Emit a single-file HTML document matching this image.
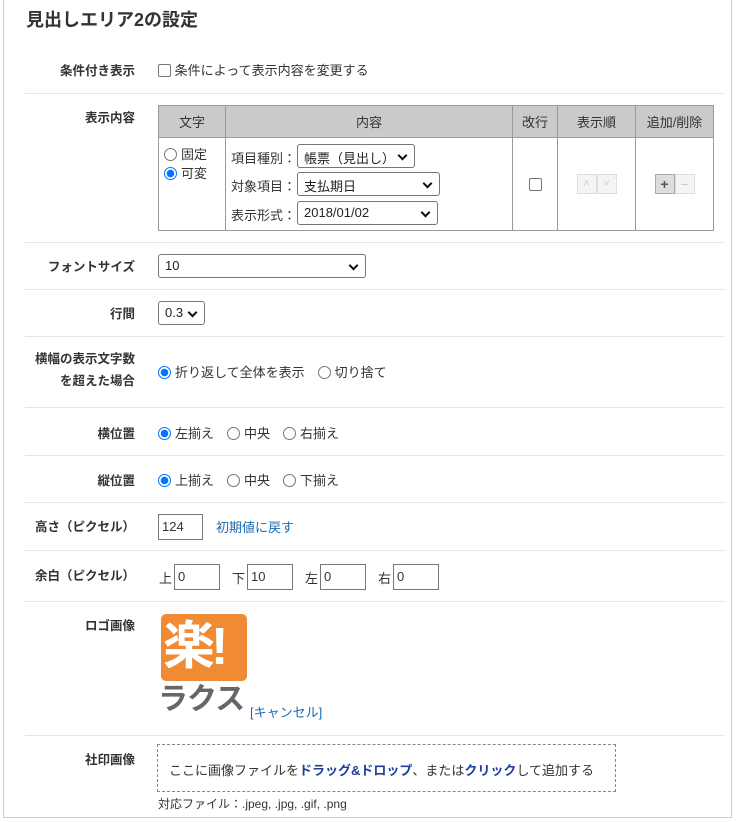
<!DOCTYPE html>
<html><head><meta charset="utf-8"><style>
*{box-sizing:border-box}
body{margin:0;width:736px;height:822px;background:#fff;font-family:"Liberation Sans","Noto Sans CJK JP",sans-serif;font-size:13px;color:#333;position:relative;overflow:hidden}
.frame{position:absolute;left:3px;top:-2px;width:729px;height:820px;border:1px solid #ccc}
.a{position:absolute}
h1{position:absolute;left:26px;top:6px;margin:0;font-size:18px;font-weight:bold;color:#333}
.lbl{position:absolute;right:601px;font-weight:bold;font-size:12.5px;text-align:right;white-space:nowrap}
.hr{position:absolute;left:25px;width:700px;height:1px;background:#e6e6e6}
.sel{position:absolute;height:24px;border:1px solid #767676;border-radius:3px;background:#fff;padding:3px 6px;font-size:13px;color:#222}
.sel:after{content:"";position:absolute;right:8px;top:7px;width:5px;height:5px;border-right:2px solid #111;border-bottom:2px solid #111;transform:rotate(45deg)}
.rad{display:inline-block;width:13px;height:13px;border:1px solid #767676;border-radius:50%;vertical-align:-2px;margin-right:4px;background:#fff}
.rad.on{border:1px solid #0075ff;background:radial-gradient(circle,#0075ff 3.5px,#fff 4px)}
.cb{display:inline-block;width:13px;height:13px;border:1px solid #767676;border-radius:2px;vertical-align:-2px;background:#fff}
.inp{position:absolute;height:26px;border:1px solid #767676;padding:4px 3px;font-size:13px;background:#fff}
table{border-collapse:collapse;position:absolute;left:158px;top:105px;width:556px}
td,th{border:1px solid #999;font-weight:normal;font-size:13px}
th{background:#c8cbc7;height:32px}
.btn{display:inline-block;width:20px;height:20px;border:1px solid #ddd;background:#f4f4f4;color:#ccc;font-size:11px;text-align:center;line-height:18px;vertical-align:middle}
a{color:#1a6bb5;text-decoration:none}
</style></head><body>
<div class="frame"></div>
<h1>見出しエリア2の設定</h1>

<div class="lbl" style="top:60px">条件付き表示</div>
<div class="a" style="left:158px;top:60px"><span class="cb"></span> 条件によって表示内容を変更する</div>
<div class="hr" style="top:93px"></div>

<div class="lbl" style="top:107px">表示内容</div>
<table>
<tr><th style="width:67px">文字</th><th style="width:287px">内容</th><th style="width:45px">改行</th><th style="width:78px">表示順</th><th>追加/削除</th></tr>
<tr style="height:93px"><td style="vertical-align:top;padding:7px 5px;line-height:19px"><span class="rad"></span>固定<br><span class="rad on"></span>可変</td>
<td style="position:relative">
<div class="a" style="left:5px;top:10px">項目種別：</div><div class="sel" style="left:71px;top:6px;width:118px">帳票（見出し）</div>
<div class="a" style="left:5px;top:38px">対象項目：</div><div class="sel" style="left:71px;top:34px;width:143px">支払期日</div>
<div class="a" style="left:5px;top:67px">表示形式：</div><div class="sel" style="left:71px;top:63px;width:141px">2018/01/02</div>
</td>
<td style="text-align:center"><span class="cb"></span></td>
<td style="text-align:center"><span class="btn">˄</span><span class="btn">˅</span></td>
<td style="text-align:center"><span class="btn" style="background:#ddd;border-color:#aaa;color:#555;font-weight:bold;font-size:14px">+</span><span class="btn" style="font-size:14px">−</span></td></tr>
</table>
<div class="hr" style="top:242px"></div>

<div class="lbl" style="top:256px">フォントサイズ</div>
<div class="sel" style="left:158px;top:254px;width:208px">10</div>
<div class="hr" style="top:289px"></div>

<div class="lbl" style="top:303px">行間</div>
<div class="sel" style="left:158px;top:301px;width:47px">0.3</div>
<div class="hr" style="top:336px"></div>

<div class="lbl" style="top:348px;line-height:22px">横幅の表示文字数<br>を超えた場合</div>
<div class="a" style="left:158px;top:362px"><span class="rad on"></span>折り返して全体を表示　<span class="rad"></span>切り捨て</div>
<div class="hr" style="top:407px"></div>

<div class="lbl" style="top:423px">横位置</div>
<div class="a" style="left:158px;top:423px"><span class="rad on"></span>左揃え　<span class="rad"></span>中央　<span class="rad"></span>右揃え</div>
<div class="hr" style="top:455px"></div>

<div class="lbl" style="top:470px">縦位置</div>
<div class="a" style="left:158px;top:470px"><span class="rad on"></span>上揃え　<span class="rad"></span>中央　<span class="rad"></span>下揃え</div>
<div class="hr" style="top:502px"></div>

<div class="lbl" style="top:516px">高さ（ピクセル）</div>
<div class="inp" style="left:158px;top:514px;width:45px">124</div>
<div class="a" style="left:216px;top:517px"><a>初期値に戻す</a></div>
<div class="hr" style="top:550px"></div>

<div class="lbl" style="top:565px">余白（ピクセル）</div>
<div class="a" style="left:159px;top:568px">上</div><div class="inp" style="left:174px;top:564px;width:46px">0</div>
<div class="a" style="left:232px;top:568px">下</div><div class="inp" style="left:247px;top:564px;width:46px">10</div>
<div class="a" style="left:305px;top:568px">左</div><div class="inp" style="left:320px;top:564px;width:46px">0</div>
<div class="a" style="left:378px;top:568px">右</div><div class="inp" style="left:393px;top:564px;width:46px">0</div>
<div class="hr" style="top:601px"></div>

<div class="lbl" style="top:615px">ロゴ画像</div>
<div class="a" style="left:161px;top:614px;width:86px;height:67px;background:#f08a35;border-radius:5px;color:#fff;font-size:52px;font-weight:bold;line-height:66px;padding-left:2px;letter-spacing:-4px">楽!</div>
<div class="a" style="left:158px;top:683px;font-size:30px;font-weight:bold;color:#666;line-height:34px;letter-spacing:-1px">ラクス</div>
<div class="a" style="left:250px;top:702px"><a>[キャンセル]</a></div>
<div class="hr" style="top:735px"></div>

<div class="lbl" style="top:749px">社印画像</div>
<div class="a" style="left:157px;top:744px;width:459px;height:48px;border:1px dashed #888;font-size:13px;padding-top:15px;padding-left:11px">ここに画像ファイルを<b style="color:#1f3f9e">ドラッグ&amp;ドロップ</b>、または<b style="color:#1f3f9e">クリック</b>して追加する</div>
<div class="a" style="left:158px;top:795px;font-size:12px">対応ファイル：.jpeg, .jpg, .gif, .png</div>
</body></html>
